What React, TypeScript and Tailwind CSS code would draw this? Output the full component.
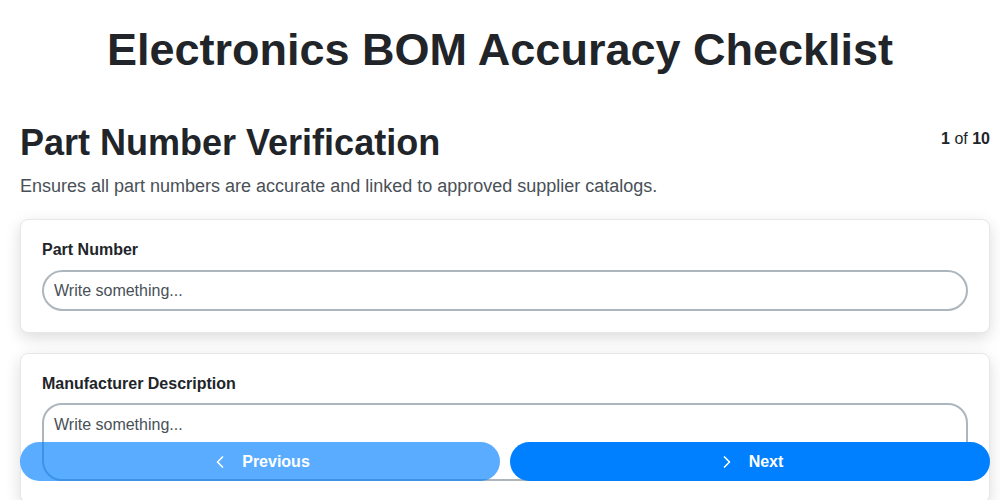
import { ChevronLeft, ChevronRight } from "lucide-react";

const fields = [
  { label: "Part Number", type: "input" },
  { label: "Manufacturer Description", type: "textarea" },
];

export default function App() {
  return (
    <div className="relative min-h-screen bg-white font-['Liberation_Sans',Arial,sans-serif] text-[#212529]">
      <h1 className="pt-[22px] text-center text-[45px] font-bold leading-[56px]">
        Electronics BOM Accuracy Checklist
      </h1>

      <div className="pl-5 pr-[10px] pt-[45px]">
        <div className="flex items-start justify-between">
          <h2 className="text-[36px] font-bold leading-[40px]">Part Number Verification</h2>
          <div className="pt-[4px] text-base">
            <span className="font-bold">1</span> of <span className="font-bold">10</span>
          </div>
        </div>
        <p className="mt-[11px] text-[18px] leading-[24px] text-[#495057]">
          Ensures all part numbers are accurate and linked to approved supplier catalogs.
        </p>

        <div className="mt-[21px] flex flex-col gap-[20px] pb-24">
          {fields.map((f) => (
            <div
              key={f.label}
              className="rounded-lg border border-[#e5e7eb] bg-white px-[21px] pb-[21px] pt-[20px] shadow-[0_5px_16px_rgba(0,0,0,0.14)]"
            >
              <label className="block text-base font-bold leading-[20px]">{f.label}</label>
              {f.type === "input" ? (
                <input
                  placeholder="Write something..."
                  className="mt-[10px] h-[41px] w-full rounded-full border-2 border-[#adb5bd] bg-white px-[10px] text-base text-[#212529] outline-none placeholder:text-[#495057]"
                />
              ) : (
                <textarea
                  placeholder="Write something..."
                  className="mt-[9px] block h-[78px] w-full resize-none rounded-[20px] border-2 border-[#adb5bd] bg-white px-[10px] py-[8px] text-base text-[#212529] outline-none placeholder:text-[#495057]"
                />
              )}
            </div>
          ))}
        </div>
      </div>

      <div className="fixed bottom-[19px] left-5 right-[10px] flex gap-[10px]">
        <button className="flex h-[39px] flex-1 items-center justify-center gap-[12px] rounded-full bg-[#0080ff] text-base font-bold text-white opacity-65">
          <ChevronLeft size={20} strokeWidth={2} />
          Previous
        </button>
        <button className="flex h-[39px] flex-1 items-center justify-center gap-[12px] rounded-full bg-[#0080ff] text-base font-bold text-white">
          <ChevronRight size={20} strokeWidth={2} />
          Next
        </button>
      </div>
    </div>
  );
}
